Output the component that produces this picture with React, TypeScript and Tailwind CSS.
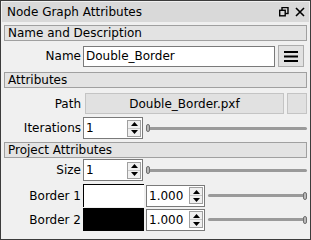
import { ReactNode } from "react";

const font = { fontFamily: "Tahoma, 'DejaVu Sans', sans-serif" };

const SectionHeader = ({ title }: { title: string }) => (
  <div className="h-[16px] border border-[#a0a0a0] bg-[#e3e3e3] pl-[3px] text-[12px] leading-[14px] text-black">
    {title}
  </div>
);

const Label = ({ children }: { children: ReactNode }) => (
  <div className="w-[79px] shrink-0 pr-[2px] text-right text-[12px] text-black">{children}</div>
);

const SpinArrows = () => (
  <div className="flex h-[17px] w-[14px] flex-col border border-[#a0a0a0] bg-[#f0f0f0]">
    <div className="flex flex-1 items-center justify-center border-b border-[#c8c8c8]">
      <svg width="7" height="4" viewBox="0 0 7 4">
        <path d="M3.5 0 L7 4 L0 4 Z" fill="#000" />
      </svg>
    </div>
    <div className="flex flex-1 items-center justify-center">
      <svg width="7" height="4" viewBox="0 0 7 4">
        <path d="M0 0 L7 0 L3.5 4 Z" fill="#000" />
      </svg>
    </div>
  </div>
);

const SpinBox = ({ value, width }: { value: string; width: string }) => (
  <div className={`flex h-[22px] items-center justify-between border border-[#7a7a7a] bg-white pl-[2px] pr-[1px] ${width}`}>
    <span className="text-[12px] text-black">{value}</span>
    <SpinArrows />
  </div>
);

const Slider = ({ end }: { end?: boolean }) => (
  <div className="relative ml-[3px] flex h-[22px] flex-1 items-center">
    <div className="h-[3px] w-full rounded-full bg-[#9a9a9a]" />
    <div
      className={`absolute top-[7px] h-[8px] w-[4px] rounded-[2px] border border-[#707070] bg-[#b8b8b8] ${
        end ? "right-0" : "left-0"
      }`}
    />
  </div>
);

export default function App() {
  return (
    <div
      className="flex h-[240px] w-[311px] flex-col border border-[#3c3c3c] bg-[#f0f0f0]"
      style={font}
    >
      {/* title bar */}
      <div className="mx-px mt-px flex h-[20px] items-center justify-between bg-[#d9d9d9] pl-[5px] pr-[4px]">
        <span className="text-[12px] text-black">Node Graph Attributes</span>
        <div className="flex items-center gap-[6px]">
          <svg width="10" height="10" viewBox="0 0 10 10">
            <rect x="3" y="0.5" width="6" height="6" fill="none" stroke="#000" strokeWidth="1.4" />
            <rect x="0.7" y="3.3" width="5.5" height="5.5" fill="#d9d9d9" stroke="#000" strokeWidth="1.4" />
          </svg>
          <svg width="10" height="10" viewBox="0 0 10 10">
            <path d="M1 1 L9 9 M9 1 L1 9" stroke="#000" strokeWidth="1.6" />
          </svg>
        </div>
      </div>

      <div className="flex flex-1 flex-col px-[3px] pt-[3px]">
        <SectionHeader title="Name and Description" />

        <div className="mt-[4px] flex items-center">
          <Label>Name</Label>
          <div className="flex h-[21px] w-[192px] items-center border border-[#7a7a7a] bg-white pl-[2px] text-[12px] text-black">
            Double_Border
          </div>
          <div className="ml-[3px] flex h-[22px] w-[26px] items-center justify-center border border-[#adadad] bg-[#e1e1e1]">
            <svg width="14" height="11" viewBox="0 0 14 11">
              <path d="M0 1 H14 M0 5.5 H14 M0 10 H14" stroke="#000" strokeWidth="2" />
            </svg>
          </div>
        </div>

        <div className="mt-[5px]">
          <SectionHeader title="Attributes" />
        </div>

        <div className="mt-[5px] flex items-center">
          <Label>Path</Label>
          <div className="ml-[2px] flex h-[21px] w-[199px] items-center justify-center border border-[#c4c4c4] bg-[#e1e1e1] text-[12px] text-black">
            Double_Border.pxf
          </div>
          <div className="ml-[3px] h-[21px] w-[20px] border border-[#c4c4c4] bg-[#e1e1e1]" />
        </div>

        <div className="mt-[3px] flex items-center">
          <Label>Iterations</Label>
          <SpinBox value="1" width="w-[60px]" />
          <Slider />
        </div>

        <div className="mt-[3px]">
          <SectionHeader title="Project Attributes" />
        </div>

        <div className="mt-[1px] flex items-center">
          <Label>Size</Label>
          <SpinBox value="1" width="w-[60px]" />
          <Slider />
        </div>

        <div className="mt-[3px] flex items-center">
          <Label>Border 1</Label>
          <div className="h-[23px] w-[61px] border-l border-t border-black bg-white" />
          <div className="ml-[2px]">
            <SpinBox value="1.000" width="w-[59px]" />
          </div>
          <Slider end />
        </div>

        <div className="mt-[1px] flex items-center">
          <Label>Border 2</Label>
          <div className="h-[23px] w-[61px] bg-black" />
          <div className="ml-[2px]">
            <SpinBox value="1.000" width="w-[59px]" />
          </div>
          <Slider end />
        </div>
      </div>
    </div>
  );
}
